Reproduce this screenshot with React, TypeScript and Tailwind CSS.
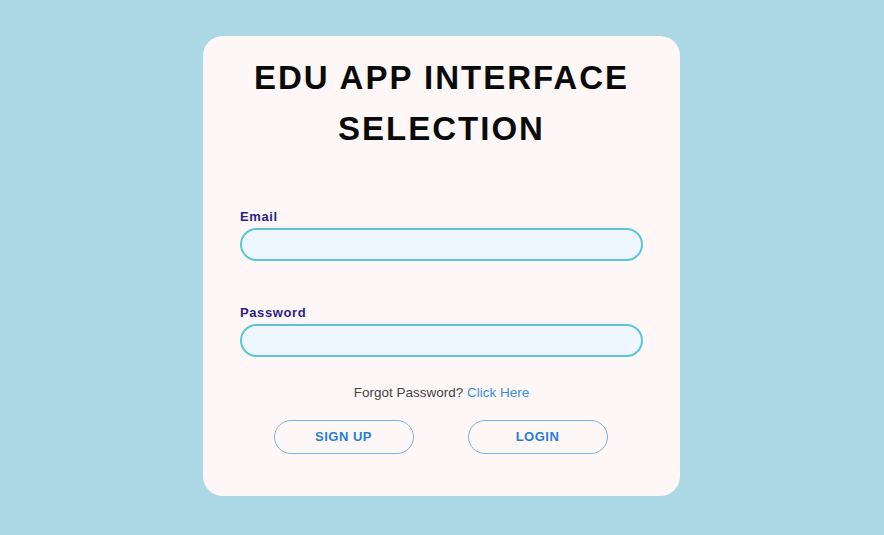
export default function App() {
  return (
    <div
      className="w-full min-h-screen bg-[#add8e6] flex justify-center"
      style={{ height: 535 }}
    >
      <div
        className="mt-[36px] mr-[1px] w-[477px] h-[460px] bg-[#fdf8f7] rounded-[20px] flex flex-col px-[37px] pt-[16px]"
        style={{ fontFamily: '"Liberation Sans", Arial, sans-serif' }}
      >
        <h1 className="text-center text-[33px] leading-[51px] font-bold tracking-[2px] text-[#0a0a0a]">
          EDU APP INTERFACE
          <br />
          SELECTION
        </h1>
        <label className="mt-[55px] text-[13px] leading-[16px] font-bold tracking-[0.6px] text-[#2b1f86]">
          Email
        </label>
        <input
          type="email"
          className="mt-[3px] h-[33px] w-full rounded-full border-2 border-[#5cc6d6] bg-[#eef7ff] outline-none px-4"
        />
        <label className="mt-[44px] text-[13px] leading-[16px] font-bold tracking-[0.6px] text-[#2b1f86]">
          Password
        </label>
        <input
          type="password"
          className="mt-[3px] h-[33px] w-full rounded-full border-2 border-[#5cc6d6] bg-[#eef7ff] outline-none px-4"
        />
        <p className="mt-[26px] text-center text-[13.5px] leading-[20px] text-[#444]">
          Forgot Password? <a className="text-[#3b8ee6] cursor-pointer">Click Here</a>
        </p>
        <div className="mt-[17px] pr-[2px] flex justify-center gap-[54px]">
          <button className="w-[140px] h-[34px] rounded-full border border-[#7db2e2] text-[13px] font-bold tracking-[0.5px] text-[#2a7dd6] bg-transparent">
            SIGN UP
          </button>
          <button className="w-[140px] h-[34px] rounded-full border border-[#7db2e2] text-[13px] font-bold tracking-[0.5px] text-[#2a7dd6] bg-transparent">
            LOGIN
          </button>
        </div>
      </div>
    </div>
  );
}
